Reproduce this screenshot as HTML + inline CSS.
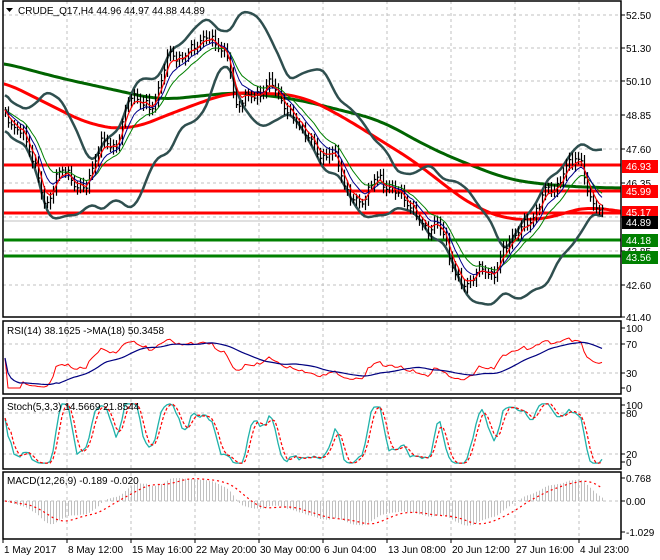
<!DOCTYPE html>
<html><head><meta charset="utf-8"><style>
html,body{margin:0;padding:0;background:#fff;width:660px;height:560px;overflow:hidden}
svg{display:block}
text{font-family:"Liberation Sans",sans-serif;font-size:10px}
</style></head><body>
<svg id="s" width="660" height="560" xmlns="http://www.w3.org/2000/svg"></svg>
<script>
var S=[];function add(s){S.push(s);}
var kp=[[5,110],[20,130],[35,170],[45,205],[55,175],[70,180],[85,185],[100,150],[115,140],[130,100],[150,105],[170,60],[185,50],[200,45],[220,38],[228,60],[235,115],[245,95],[265,88],[285,100],[300,130],[315,150],[330,150],[345,190],[360,200],[375,185],[390,180],[405,205],[420,220],[435,225],[445,245],[455,270],[465,285],[480,275],[495,265],[510,245],[525,220],[540,205],[555,185],[565,165],[575,160],[582,170],[588,200],[595,195],[605,215]];
function interp(k,x){for(var i=0;i<k.length-1;i++){if(x<=k[i+1][0]){var t=(x-k[i][0])/(k[i+1][0]-k[i][0]);return k[i][1]+t*(k[i+1][1]-k[i][1]);}}return k[k.length-1][1];}
var N=200,xs=[],C=[],O=[],H=[],L=[];
for(var i=0;i<N;i++){var x=5+i*3;xs.push(x);var c=interp(kp,x)+3*Math.sin(i*1.7)+6*Math.sin(i*0.55)+3*Math.sin(i*0.9)+1.5*Math.sin(i*2.9);C.push(c);}
for(var i=0;i<N;i++){var o=i?C[i-1]:C[0];O.push(o);H.push(Math.min(o,C[i])-3-4*Math.abs(Math.sin(i*3.3)));L.push(Math.max(o,C[i])+3+4*Math.abs(Math.cos(i*2.1)));}
function pl(xa,ya,col,w,extra){var p=[];for(var i=0;i<xa.length;i++)if(ya[i]!=null)p.push(xa[i].toFixed(1)+','+ya[i].toFixed(1));return '<polyline fill="none" stroke="'+col+'" stroke-width="'+w+'" stroke-linejoin="round" '+(extra||'')+' points="'+p.join(' ')+'"/>';}
function ema(a,n){var k=2/(n+1),r=[],e=a[0];for(var i=0;i<a.length;i++){e=i?a[i]*k+e*(1-k):a[0];r.push(e);}return r;}
function sma(a,n){var r=[];for(var i=0;i<a.length;i++){var s=Math.max(0,i-n+1),b=a.slice(s,i+1);r.push(b.reduce(function(p,q){return p+q},0)/b.length);}return r;}
function csma(a,n){var r=[],h=Math.floor(n/2);for(var i=0;i<a.length;i++){var s=Math.max(0,i-h),e=Math.min(a.length,i+h+1),b=a.slice(s,e);r.push(b.reduce(function(p,q){return p+q},0)/b.length);}return r;}
var vx=[67,131,195,259,323,387,451,515,579];
var prices=[[52.50,15],[51.30,48],[50.10,81],[48.85,115],[47.60,149],[46.35,183],[45.10,217],[43.85,251],[42.60,285],[41.40,317]];
function grid(y0,y1,hs){vx.forEach(function(x){add('<line x1="'+x+'" y1="'+y0+'" x2="'+x+'" y2="'+y1+'" stroke="#c0c0c0" stroke-dasharray="3,3"/>');});hs.forEach(function(y){add('<line x1="3" y1="'+y+'" x2="621" y2="'+y+'" stroke="#c0c0c0" stroke-dasharray="3,3"/>');});}
add('<clipPath id="c1"><rect x="4" y="1" width="617" height="316"/></clipPath><clipPath id="c2"><rect x="4" y="322" width="617" height="72"/></clipPath><clipPath id="c3"><rect x="4" y="399" width="617" height="70"/></clipPath><clipPath id="c4"><rect x="4" y="473" width="617" height="66"/></clipPath>');
grid(1,317,prices.map(function(p){return p[1]}));
add('<g clip-path="url(#c1)">');
var g200=[[0,62],[60,78],[160,100],[240,92],[300,100],[380,120],[430,148],[470,165],[510,180],[560,186],[610,188]];
var r100=[[0,80],[40,100],[90,125],[130,130],[180,110],[230,92],[300,95],[340,115],[380,140],[420,165],[450,190],[480,210],[510,220],[540,220],[560,215],[580,208],[595,205],[610,212]];
function smooth(k){var xa=[],ya=[];for(var x=-30;x<=640;x+=3){xa.push(x);ya.push(interp(k,Math.max(0,Math.min(610,x))));}return [xa,csma(ya,15)];}
var g=smooth(g200);add(pl(g[0],g[1],'#006400',3));
var r=smooth(r100);add(pl(r[0],r[1],'#ff0000',3));
[[165,'#ff0000'],[191,'#ff0000'],[213,'#ff0000'],[240,'#008000'],[256,'#008000']].forEach(function(l){add('<line x1="0" y1="'+l[0]+'" x2="621" y2="'+l[0]+'" stroke="'+l[1]+'" stroke-width="3"/>');});
add('<line x1="0" y1="221" x2="621" y2="221" stroke="#c0c0c0"/>');
var up=[],lo=[];for(var i=0;i<N;i++){var s=Math.max(0,i-19),a=C.slice(s,i+1),m=a.reduce(function(p,q){return p+q},0)/a.length,v=Math.sqrt(a.reduce(function(p,q){return p+(q-m)*(q-m)},0)/a.length);v=Math.max(v,9);up.push(m-2*v);lo.push(m+2*v);}
add(pl(xs,csma(up,3),'#2f4f4f',2.5));add(pl(xs,csma(lo,3),'#2f4f4f',2.5));
var d='';for(var i=0;i<N;i++){var x=xs[i]+0.5;d+='M'+x+' '+H[i].toFixed(1)+'V'+L[i].toFixed(1)+'M'+(x-1)+' '+O[i].toFixed(1)+'h1M'+x+' '+C[i].toFixed(1)+'h1.5';}
add('<path d="'+d+'" stroke="#000" stroke-width="1.2" fill="none"/>');
add(pl(xs,ema(C,13),'#008000',1));add(pl(xs,ema(C,8),'#00008b',1));add(pl(xs,ema(C,4),'#ff0000',1.2));
add('</g>');
grid(322,394,[344,373]);
var rsi=[],ag=0,al=0;for(var i=0;i<N;i++){var ch=i?(C[i-1]-C[i]):0;var gg=Math.max(ch,0),ll=Math.max(-ch,0);ag=(ag*13+gg)/14;al=(al*13+ll)/14;rsi.push(al+ag==0?50:100*ag/(ag+al));}
var rsiM=sma(rsi,18);
add('<g clip-path="url(#c2)">'+pl(xs,rsi.map(function(v){return 388-v*0.6}),'#ff0000',1)+pl(xs,rsiM.map(function(v){return 388-v*0.6}),'#000080',1.2)+'</g>');
grid(399,469,[413,454]);
var kr=[];for(var i=0;i<N;i++){var s=Math.max(0,i-4),hh=Math.min.apply(null,H.slice(s,i+1)),lw=Math.max.apply(null,L.slice(s,i+1));kr.push(lw==hh?50:100*(lw-C[i])/(lw-hh));}
var K=sma(kr,3),D=sma(K,3);
function sy(v){v=(v-50)*1.35+50;v=Math.max(-2,Math.min(102,v));return 462-v*0.57;}
add('<g clip-path="url(#c3)">'+pl(xs,K.map(sy),'#20b2aa',1.3)+pl(xs,D.map(sy),'#ff0000',1.2,'stroke-dasharray="3,2"')+'</g>');
grid(473,539,[501]);
var P=C.map(function(y){return -y/27.2}),e12=ema(P,12),e26=ema(P,26),M=[];for(var i=0;i<N;i++)M.push(e12[i]-e26[i]);var SG=sma(M,9);
var hd='';for(var i=0;i<N;i++){var y=501-M[i]*28;hd+='M'+(xs[i]+0.5)+' 501V'+y.toFixed(1);}
add('<g clip-path="url(#c4)"><path d="'+hd+'" stroke="#c0c0c0" stroke-width="1"/>'+pl(xs,SG.map(function(v){return 501-v*28}),'#ff0000',1.2,'stroke-dasharray="2,3"')+'</g>');
[[3,1,618,316],[3,321,618,73],[3,398,618,71],[3,472,618,67]].forEach(function(f){add('<rect x="'+f[0]+'" y="'+f[1]+'" width="'+f[2]+'" height="'+f[3]+'" fill="none" stroke="#000" stroke-width="1.5"/>');});
function lab(y,t){add('<line x1="621" y1="'+y+'" x2="625" y2="'+y+'" stroke="#000"/><text x="626" y="'+(y+4)+'" fill="#000">'+t+'</text>');}
prices.forEach(function(p){lab(p[1],p[0].toFixed(2));});
lab(328,'100');lab(344,'70');lab(373,'30');lab(388,'0');
lab(405,'100');lab(413,'80');lab(454,'20');lab(462,'0');
lab(478,'0.768');lab(501,'0.00');lab(532,'-1.029');
[[166,'46.93','#ff0000'],[191,'45.99','#ff0000'],[212,'45.17','#ff0000'],[222,'44.89','#000'],[240,'44.18','#008000'],[257,'43.56','#008000']].forEach(function(b){add('<rect x="622" y="'+(b[0]-6)+'" width="36" height="13" fill="'+b[2]+'"/><text x="626" y="'+(b[0]+4)+'" fill="#fff">'+b[1]+'</text>');});
var tl=['1 May 2017','8 May 12:00','15 May 16:00','22 May 20:00','30 May 00:00','6 Jun 04:00','13 Jun 08:00','20 Jun 12:00','27 Jun 16:00','4 Jul 23:00'];
var tx=[3,67,131,195,259,323,387,451,515,579];
tl.forEach(function(t,i){add('<line x1="'+tx[i]+'" y1="539" x2="'+tx[i]+'" y2="543" stroke="#000"/><text x="'+(tx[i]+1)+'" y="553">'+t+'</text>');});
add('<path d="M6 8h7l-3.5 4z" fill="#000"/><text x="18" y="14">CRUDE_Q17,H4  44.96 44.97 44.88 44.89</text>');
add('<text x="7" y="334">RSI(14) 38.1625  -&gt;MA(18) 50.3458</text>');
add('<text x="7" y="410">Stoch(5,3,3) 14.5669 21.8544</text>');
add('<text x="7" y="484">MACD(12,26,9) -0.189 -0.020</text>');
document.getElementById('s').innerHTML=S.join('');
</script>
</body></html>
